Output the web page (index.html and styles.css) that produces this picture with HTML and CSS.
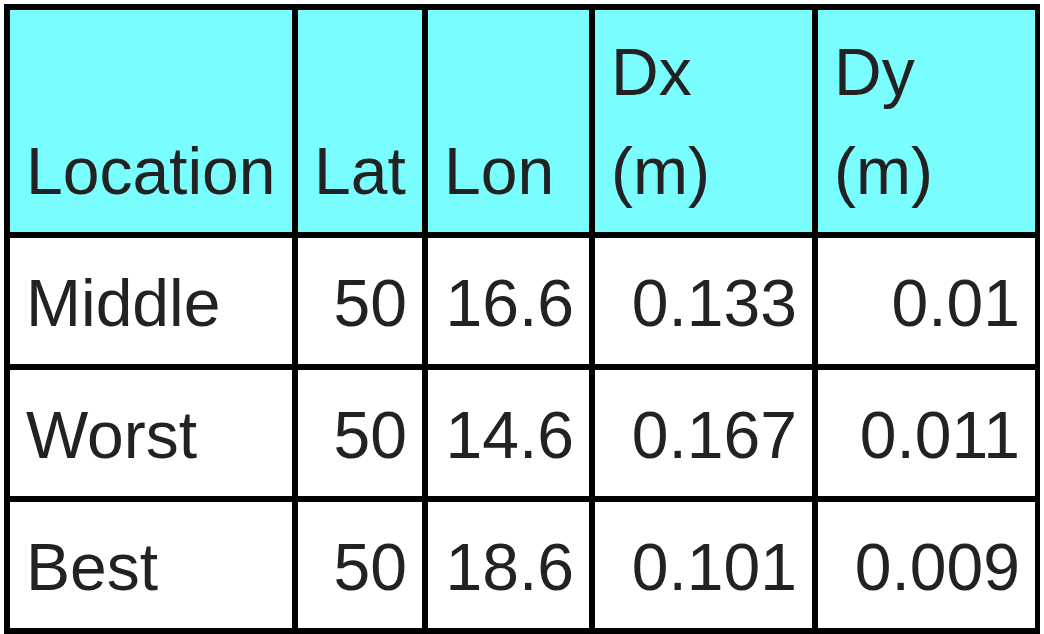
FILE: index.html
```html
<!DOCTYPE html>
<html lang="en">

<head>
  <meta charset="UTF-8">
  <meta name="viewport" content="width=device-width, initial-scale=1.0">
  <title>Location error</title>
  <link rel="stylesheet" href="styles.css">
</head>

<body>
  <table class="error-table">
    <thead>
      <tr>
        <th class="col-location">Location</th>
        <th class="col-lat">Lat</th>
        <th class="col-lon">Lon</th>
        <th class="col-d">Dx<br>(m)</th>
        <th class="col-d">Dy<br>(m)</th>
      </tr>
    </thead>
    <tbody>
      <tr class="first">
        <td class="name">Middle</td>
        <td>50</td>
        <td>16.6</td>
        <td>0.133</td>
        <td>0.01</td>
      </tr>
      <tr>
        <td class="name">Worst</td>
        <td>50</td>
        <td>14.6</td>
        <td>0.167</td>
        <td>0.011</td>
      </tr>
      <tr>
        <td class="name">Best</td>
        <td>50</td>
        <td>18.6</td>
        <td>0.101</td>
        <td>0.009</td>
      </tr>
    </tbody>
  </table>
</body>

</html>
```

FILE: styles.css
```css
body {
  margin: 4px;
  background: #fff;
  font-family: "Liberation Sans", Arial, Helvetica, sans-serif;
  color: #222;
}

.error-table {
  table-layout: fixed;
  width: 1037px;
  border-collapse: separate;
  border-spacing: 0;
  border-top: 6px solid #000;
  border-left: 6px solid #000;
  font-size: 66px;
  line-height: 99px;
}

.error-table th,
.error-table td {
  box-sizing: border-box;
  border-right: 6px solid #000;
  border-bottom: 6px solid #000;
  font-weight: normal;
}

.error-table th {
  height: 228px;
  padding: 13px 15px 11px 16px;
  background: #7afdfe;
  text-align: left;
  vertical-align: bottom;
}

.error-table td {
  height: 132px;
  padding: 16px 15px 11px 16px;
  text-align: right;
  vertical-align: top;
  white-space: nowrap;
}

.error-table .first td {
  height: 131px;
}

.error-table td.name {
  text-align: left;
}

.col-location {
  width: 288px;
}

.col-lat {
  width: 130px;
}

.col-lon {
  width: 167px;
}

.col-d {
  width: 223px;
}
```
